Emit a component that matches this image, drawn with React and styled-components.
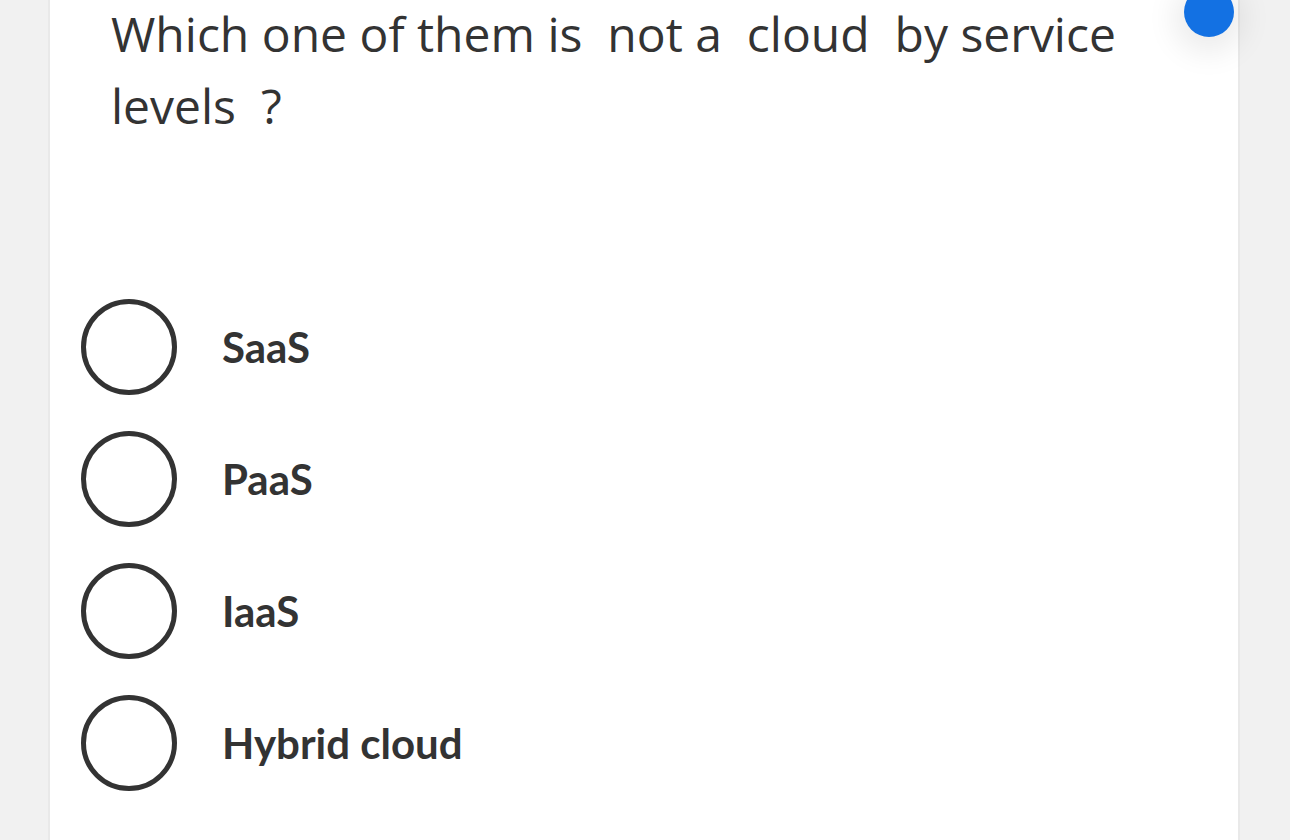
import React from "react";
import styled, { createGlobalStyle } from "styled-components";

const GlobalStyle = createGlobalStyle`
  html, body {
    margin: 0;
    padding: 0;
    background: #f1f1f1;
    overflow: hidden;
  }
`;

const options = ["SaaS", "PaaS", "IaaS", "Hybrid cloud"];

export default function App() {
  return (
    <>
      <GlobalStyle />
      <Page>
        <Card>
          <FloatDot />
          <Question>
            {"Which one of them is  not a  cloud  by service levels  ?"}
          </Question>
          <OptionList>
            {options.map((label) => (
              <Option key={label}>
                <Radio />
                <Label>{label}</Label>
              </Option>
            ))}
          </OptionList>
        </Card>
      </Page>
    </>
  );
}

const Page = styled.div`
  width: 1290px;
  height: 840px;
  overflow: hidden;
`;

const Card = styled.div`
  position: relative;
  margin-left: 48px;
  width: 1188px;
  min-height: 900px;
  background: #ffffff;
  border-left: 2px solid #e9e9e9;
  border-right: 2px solid #e9e9e9;
`;

const FloatDot = styled.div`
  position: absolute;
  top: -11px;
  left: 1134px;
  width: 50px;
  height: 50px;
  border-radius: 50%;
  background: #1371e3;
  box-shadow: 0 6px 30px 10px rgba(0, 0, 0, 0.08);
`;

const Question = styled.p`
  margin: -2px 0 0;
  padding: 0 110px 0 61px;
  font-family: "Open Sans", sans-serif;
  font-size: 48px;
  line-height: 72px;
  color: #333333;
  white-space: pre-wrap;
`;

const OptionList = styled.div`
  display: flex;
  flex-direction: column;
  margin-top: 139px;
`;

const Option = styled.label`
  display: flex;
  align-items: center;
  height: 132px;
  padding-left: 31px;
  gap: 45px;
  cursor: pointer;
`;

const Radio = styled.span`
  box-sizing: border-box;
  width: 96px;
  height: 96px;
  border-radius: 50%;
  border: 5px solid #333333;
  flex-shrink: 0;
`;

const Label = styled.span`
  font-family: Lato, sans-serif;
  font-weight: 700;
  font-size: 42px;
  color: #333333;
`;
